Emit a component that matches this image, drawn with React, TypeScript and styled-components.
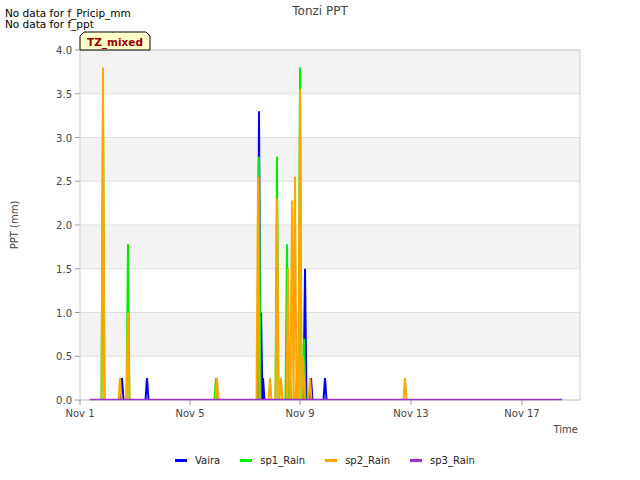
import React from "react";
import styled, { createGlobalStyle } from "styled-components";

const Global = createGlobalStyle`
  html, body { margin: 0; padding: 0; background: #fff; }
  body { font-family: "DejaVu Sans", sans-serif; }
`;

const Page = styled.div`
  position: relative;
  width: 640px;
  height: 480px;
  background: #fff;
  overflow: hidden;
`;

const Notes = styled.div`
  position: absolute;
  left: 5px;
  top: 8px;
  font-size: 10.5px;
  line-height: 11px;
  color: #000;
`;

const Legend = styled.div`
  position: absolute;
  left: 0;
  right: 0;
  top: 455px;
  display: flex;
  justify-content: center;
  gap: 20px;
  font-size: 10px;
  color: #222;
  padding-left: 10px;
`;

const LegendItem = styled.div`
  display: flex;
  align-items: center;
  gap: 8px;
`;

const Swatch = styled.span<{ c: string }>`
  width: 12px;
  height: 3px;
  background: ${(p) => p.c};
`;

const X0 = 80, Y0 = 400, W = 500;
const px = (v: number) => Y0 - v * 87.5;

const blue: [number, number][] = [[122,.25],[147,.25],[259,3.3],[261,1.0],[263,.25],[305,1.5],[311,.25],[325,.25]];
const green: [number, number][] = [[103,3.3],[128,1.78],[216,.25],[259,2.78],[277,2.78],[287,1.78],[290,.25],[300,3.8],[304,.7]];
const orange: [number, number][] = [[103,3.8],[120,.25],[128,1.0],[217,.25],[258,2.55],[270,.25],[277,2.3],[281,.25],[288,1.5],[292,2.28],[295,2.55],[297,.5],[300,3.55],[303,.5],[310,.25],[405,.25]];

const spikes = (d: [number, number][]) =>
  d.map(([x, v]) => `M${x - 1.5},${Y0} L${x},${px(v)} L${x + 1.5},${Y0}`).join(" ");

const ticksX = [["Nov 1", 80], ["Nov 5", 190], ["Nov 9", 300], ["Nov 13", 411], ["Nov 17", 522]] as const;
const F = "DejaVu Sans";

export default function App() {
  const ys = [0, .5, 1, 1.5, 2, 2.5, 3, 3.5, 4];
  return (
    <Page>
      <Global />
      <svg width="640" height="480" style={{ position: "absolute", left: 0, top: 0 }}>
        <text x="320" y="15" textAnchor="middle" fontSize="12" fill="#444" fontFamily={F}>Tonzi PPT</text>
        <rect x={X0} y={50} width={W} height={350} fill="#fff" />
        {[3.5, 2.5, 1.5, 0.5].map((v) => (
          <rect key={v} x={X0} y={px(v + .5)} width={W} height={43.75} fill="#f3f3f3" />
        ))}
        {ys.map((v) => (
          <g key={v}>
            <line x1={X0} x2={X0 + W} y1={px(v)} y2={px(v)} stroke="#dedede" />
            <line x1={X0 - 5} x2={X0} y1={px(v)} y2={px(v)} stroke="#999" />
            <text x={72} y={px(v) + 4} textAnchor="end" fontSize="10" fill="#444" fontFamily={F}>{v.toFixed(1)}</text>
          </g>
        ))}
        <rect x={X0} y={50} width={W} height={350} fill="none" stroke="#ccc" />
        {ticksX.map(([l, x]) => (
          <g key={l}>
            <line x1={x} x2={x} y1={400} y2={405} stroke="#999" />
            <text x={x} y={417} textAnchor="middle" fontSize="10" fill="#444" fontFamily={F}>{l}</text>
          </g>
        ))}
        <text x="578" y="433" textAnchor="end" fontSize="10" fill="#444" fontFamily={F}>Time</text>
        <text transform="translate(18,225) rotate(-90)" textAnchor="middle" fontSize="10" fill="#444" fontFamily={F}>PPT (mm)</text>
        <path d={spikes(blue)} fill="none" stroke="#0000ff" strokeWidth="2" />
        <path d={spikes(green)} fill="none" stroke="#00ee00" strokeWidth="2" />
        <path d={spikes(orange)} fill="none" stroke="#ffa500" strokeWidth="2" />
        <line x1={90} x2={562} y1={399.5} y2={399.5} stroke="#9a32cd" strokeWidth="1.5" />
        <path d="M84,32 L146,32 L150,36 L150,50 L80,50 L80,36 Z" fill="#ffffcc" stroke="#000" />
        <text x="115" y="46" textAnchor="middle" fontSize="10.5" fontWeight="bold" fill="#990000" fontFamily={F}>TZ_mixed</text>
      </svg>
      <Notes>No data for f_Pricip_mm<br />No data for f_ppt</Notes>
      <Legend>
        <LegendItem><Swatch c="#0000ff" />Vaira</LegendItem>
        <LegendItem><Swatch c="#00ee00" />sp1_Rain</LegendItem>
        <LegendItem><Swatch c="#ffa500" />sp2_Rain</LegendItem>
        <LegendItem><Swatch c="#9a32cd" />sp3_Rain</LegendItem>
      </Legend>
    </Page>
  );
}
